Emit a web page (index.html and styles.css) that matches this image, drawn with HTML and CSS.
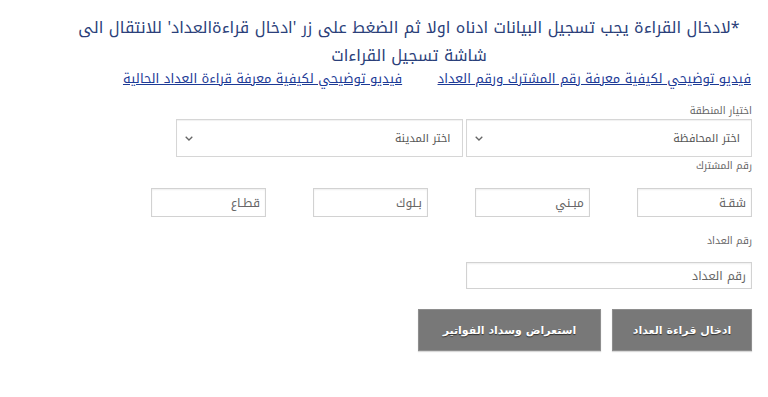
FILE: index.html
```html
<!DOCTYPE html>
<html lang="ar" dir="rtl">
<head>
<meta charset="utf-8">
<title>تسجيل القراءات</title>
<link rel="stylesheet" href="styles.css">
</head>
<body>
<div class="page">
  <h1 class="title"><span class="tline">*لادخال القراءة يجب تسجيل البيانات ادناه اولا ثم الضغط على زر 'ادخال قراءةالعداد' للانتقال الى</span><span class="tline">شاشة تسجيل القراءات</span></h1>
  <p class="links">
    <a href="#" class="link">فيديو توضيحي لكيفية معرفة رقم المشترك ورقم العداد</a>
    <a href="#" class="link">فيديو توضيحي لكيفية معرفة قراءة العداد الحالية</a>
  </p>
  <form class="form">
    <div class="lbl lbl-area">اختيار المنطقة</div>
    <div class="selects">
      <div class="select"><span>اختر المحافظة</span><svg class="chev" width="8" height="5" viewBox="0 0 8 5"><path d="M0.7 0.7 L4 4 L7.3 0.7" fill="none" stroke="#666" stroke-width="1.3"/></svg></div>
      <div class="select"><span>اختر المدينة</span><svg class="chev" width="8" height="5" viewBox="0 0 8 5"><path d="M0.7 0.7 L4 4 L7.3 0.7" fill="none" stroke="#666" stroke-width="1.3"/></svg></div>
    </div>
    <div class="lbl lbl-sub">رقم المشترك</div>
    <div class="subs">
      <input class="box" type="text" placeholder="شقـة">
      <input class="box" type="text" placeholder="مبـني">
      <input class="box" type="text" placeholder="بـلوك">
      <input class="box" type="text" placeholder="قطـاع">
    </div>
    <div class="lbl lbl-meter">رقم العداد</div>
    <input class="box meter" type="text" placeholder="رقم العداد">
    <div class="buttons">
      <button type="button" class="btn btn-enter">ادخال قراءة العداد</button>
      <button type="button" class="btn btn-bills">استعراض وسداد الفواتير</button>
    </div>
  </form>
</div>
</body>
</html>
```

FILE: styles.css
```css
html, body {
  margin: 0;
  padding: 0;
  background: #ffffff;
}

body {
  font-family: "Noto Kufi Arabic", "Droid Arabic Kufi", "Noto Sans Arabic", "DejaVu Sans", sans-serif;
  direction: rtl;
}

.page {
  width: 768px;
  height: 397px;
  overflow: hidden;
}

.title {
  margin: 0 0 0 50px;
  padding-top: 17px;
  font-size: 16px;
  font-weight: normal;
  color: #2b3f7a;
  text-align: center;
  white-space: nowrap;
}

.tline {
  display: block;
  height: 23px;
  line-height: 21px;
}

.tline + .tline {
  height: 27px;
  line-height: 31px;
}

.links {
  margin: 4px 0 0 0;
  padding-right: 17px;
  font-size: 13px;
  line-height: 16px;
  text-align: right;
}

.link {
  color: #1c3a96;
  text-decoration: underline;
}

.link + .link {
  margin-right: 31px;
}

.form {
  width: 601px;
  margin-right: 16px;
}

.lbl {
  font-size: 10px;
  line-height: 14px;
  color: #666666;
}

.lbl-area {
  margin-top: 17px;
}

.selects {
  display: flex;
  gap: 3px;
  width: 576px;
  margin-top: 1px;
}

.select {
  flex: 1;
  height: 38px;
  box-sizing: border-box;
  border: 1px solid #d6d6d6;
  box-shadow: inset 0 1px 1px rgba(0,0,0,0.06);
  display: flex;
  align-items: center;
  justify-content: space-between;
  padding: 0 11px 0 8px;
  font-size: 11px;
  color: #555555;
}

.chev {
  display: block;
}

.lbl-sub {
  margin-top: 2px;
}

.subs {
  display: flex;
  justify-content: space-between;
  margin-top: 15px;
}

.box {
  box-sizing: border-box;
  width: 115px;
  height: 29px;
  border: 1px solid #d2d2d2;
  box-shadow: inset 0 1px 2px rgba(0,0,0,0.07);
  padding: 0 5px;
  font-family: inherit;
  font-size: 12px;
  color: #555555;
  background: #ffffff;
  text-align: right;
  direction: rtl;
  outline: none;
  display: block;
}

.box::placeholder {
  color: #666666;
  opacity: 1;
}

.lbl-meter {
  margin-top: 17px;
}

.meter {
  width: 286px;
  height: 27px;
  margin-top: 14px;
}

.buttons {
  display: flex;
  gap: 11px;
  margin-top: 20px;
}

.btn {
  height: 42px;
  box-sizing: border-box;
  border: 1px solid #8e8e8e;
  background: #787878;
  color: #ffffff;
  font-family: "DejaVu Sans", sans-serif;
  font-weight: bold;
  font-size: 11px;
  text-shadow: 0 1px 1px rgba(0,0,0,0.6);
  box-shadow: 0 1px 1px rgba(0,0,0,0.15);
  padding: 0;
  cursor: pointer;
}

.btn-enter {
  width: 140px;
}

.btn-bills {
  width: 183px;
}
```
